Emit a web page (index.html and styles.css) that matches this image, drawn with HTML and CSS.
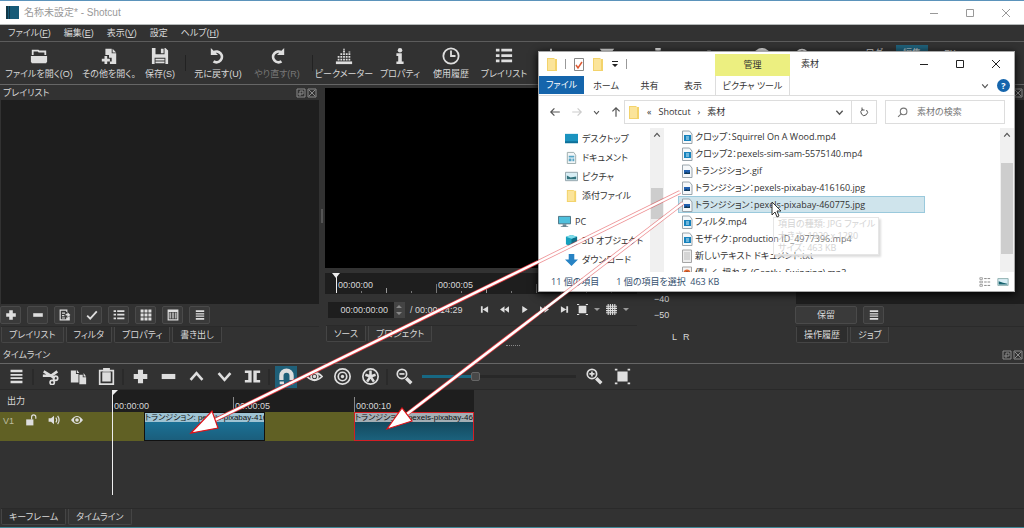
FILE: index.html
```
<!DOCTYPE html>
<html lang="ja">
<head>
<meta charset="utf-8">
<title>名称未設定* - Shotcut</title>
<link rel="stylesheet" href="styles.css">
</head>
<body>
<svg class="defs" aria-hidden="true">
  <symbol id="plus" viewBox="0 0 20 20"><path d="M7 2h6v5h5v6h-5v5H7v-5H2V7h5z"/></symbol>
  <symbol id="minus" viewBox="0 0 20 20"><path d="M2 7h16v6H2z"/></symbol>
  <symbol id="menu" viewBox="0 0 20 20"><path d="M3 2h14v3H3zM3 7h14v2H3zM3 11h14v2H3zM3 15h14v3H3z"/></symbol>
  <symbol id="list" viewBox="0 0 20 20"><path d="M1 2h4v3H1zM7 2h12v3H7zM1 8h4v3H1zM7 8h12v3H7zM1 14h4v3H1zM7 14h12v3H7z"/></symbol>
  <symbol id="float" viewBox="0 0 10 10"><path d="M1 1h8v8H1zM4 3h3v3H4zM3 5v2h2" class="s1"/></symbol>
  <symbol id="close" viewBox="0 0 10 10"><path d="M1 1h8v8H1zM2 2l6 6M8 2l-6 6" class="s1"/></symbol>
  <symbol id="min" viewBox="0 0 10 10"><path d="M1 5.500h8" class="s1"/></symbol>
  <symbol id="max" viewBox="0 0 10 10"><path d="M1.500 1.500h7v7h-7z" class="s1"/></symbol>
  <symbol id="x" viewBox="0 0 10 10"><path d="M1 1l8 8M9 1l-8 8" class="s1"/></symbol>
  <symbol id="up" viewBox="0 0 20 20"><path d="M3 14l7-8 7 8" class="s3"/></symbol>
  <symbol id="down" viewBox="0 0 20 20"><path d="M3 6l7 8 7-8" class="s3"/></symbol>
  <symbol id="folder" viewBox="0 0 12 14"><path d="M1 1h7l1 1h2v12H1z" fill="#f3d36b"/><path d="M2 2h7v11H2z" fill="#fbe49a"/></symbol>
  <symbol id="video" viewBox="0 0 12 14"><path d="M1.500 1h7l2.500 3v9.500H1.500z" fill="#f5f8fa" stroke="#9aa4ab"/><path d="M3 5h7v6H3z" fill="#1682bd"/><path d="M5 7h3M5 9h3" stroke="#c8eaf8"/></symbol>
  <symbol id="image" viewBox="0 0 12 14"><path d="M1.500 1h7l2.500 3v9.500H1.500z" fill="#f5f8fa" stroke="#9aa4ab"/><path d="M3 6h6v4H3z" fill="#1f5faf"/><path d="M3 10l2-2 2 1 2-1v2z" fill="#143a56"/></symbol>
  <symbol id="text" viewBox="0 0 12 14"><path d="M1.500 1h9v12.500h-9z" fill="#eee" stroke="#a5a5a5"/><path d="M3 4h6M3 6h6M3 8h6M3 10h6" stroke="#bbb"/></symbol>
  <symbol id="audio" viewBox="0 0 12 14"><path d="M1.500 1h9v12.500h-9z" fill="#f5f5f5" stroke="#a5a5a5"/><circle cx="6" cy="7" r="3.500" fill="#e0642d"/><circle cx="6" cy="7" r="1.500" fill="#234"/></symbol>
</svg>

<div class="app">
  <header class="titlebar">
    <svg class="logo" viewBox="0 0 13 13"><path d="M0 0h13v13H0z" fill="#175b78"/><path d="M0 0h2v13H0zM3 0h1v13H3z" fill="#123848"/></svg>
    <h1>名称未設定* - Shotcut</h1>
    <div class="winbtns">
      <button aria-label="最小化"><svg><use href="#min"/></svg></button>
      <button aria-label="最大化"><svg><use href="#max"/></svg></button>
      <button aria-label="閉じる"><svg><use href="#x"/></svg></button>
    </div>
  </header>

  <nav class="menubar">
    <button>ファイル(<u>F</u>)</button><button>編集(<u>E</u>)</button><button>表示(<u>V</u>)</button><button>設定</button><button>ヘルプ(<u>H</u>)</button>
  </nav>

  <div class="toolbar">
    <button><svg viewBox="0 0 20 20"><path d="M3 9V4h6l1 1h7v4" class="s2"/><path d="M1 10h18v6l-1 2H2l-1-2z"/></svg>ファイルを開く(O)</button>
    <button><svg viewBox="0 0 20 20"><path d="M6 2h7v5h5v12h-7v-3h2v-4h-3V9H6zM14 2l4 4h-4zM5 10h3v3h3v3H8v3H5v-3H2v-3h3z"/></svg>その他を開く。</button>
    <button><svg viewBox="0 0 20 20"><path fill-rule="evenodd" d="M1 1h15l3 3v15H1zM5 1v7h10V1zM4 12v7h12v-7z"/><path d="M11 2h3v5h-3zM5 13h10v2H5zM5 16h10v2H5z"/></svg>保存(S)</button>
    <i class="sep"></i>
    <button><svg viewBox="0 0 20 20"><path d="M5 6A6 6 0 1 1 5 16" class="s3"/><path d="M2 1v8h8z"/></svg>元に戻す(U)</button>
    <button class="off"><svg viewBox="0 0 20 20"><path d="M15 6A6 6 0 1 0 15 16" class="s3"/><path d="M18 1v8h-8z"/></svg>やり直す(R)</button>
    <i class="sep"></i>
    <button><svg viewBox="0 0 20 20"><path d="M4 15V9M7 15V6M10 15V2M13 15V6M16 15V5" stroke="#dedede" stroke-width="2" stroke-dasharray="2 1"/><path d="M1 16h18v3H1z"/></svg>ピークメーター</button>
    <button><svg viewBox="0 0 20 20"><circle cx="10" cy="3.500" r="2.500"/><path d="M6 7h6v9h2v3H6v-3h2v-6H6z"/></svg>プロパティ</button>
    <button><svg viewBox="0 0 20 20"><circle cx="10" cy="10" r="8.500" class="s2"/><path d="M10 4v6h5" class="s2"/></svg>使用履歴</button>
    <button><svg viewBox="0 0 20 20"><use href="#list"/></svg>プレイリスト</button>
    <button aria-label="フィルタ"><svg viewBox="0 0 20 20"><path d="M10 2v16" class="s2"/></svg></button>
    <button aria-label="キーフレーム"><svg viewBox="0 0 20 20"><path d="M2 2h16l-6 8v8H8v-8z"/></svg></button>
    <button aria-label="タイマー"><svg viewBox="0 0 20 20"><circle cx="10" cy="12" r="7" class="s2"/><path d="M7 1h6v3H7zM16 3l3 3"/></svg></button>
    <button aria-label="タイムライン"><svg viewBox="0 0 20 20"><path d="M8 4h4v13H8z"/></svg></button>
    <button aria-label="書き出し"><svg viewBox="0 0 20 20"><circle cx="10" cy="10" r="9"/></svg></button>
    <button aria-label="ジョブ"><svg viewBox="0 0 20 20"><circle cx="10" cy="10" r="7" class="s2"/></svg></button>
    <div class="layouts"><button>ログ</button><button class="on">編集</button><button>FX</button></div>
  </div>

  <main class="docks">
    <section class="dock">
      <div class="dockhead"><h2>プレイリスト</h2><button aria-label="フロート"><svg><use href="#float"/></svg></button><button aria-label="閉じる"><svg><use href="#close"/></svg></button></div>
      <div class="well"></div>
      <div class="btnrow">
        <button aria-label="追加"><svg><use href="#plus"/></svg></button>
        <button aria-label="削除"><svg><use href="#minus"/></svg></button>
        <button aria-label="更新"><svg viewBox="0 0 20 20"><path d="M1 1h13v4h-2V3H3v14h9v-3h2l4-2v7H1z"/><path d="M5 6h5v2H5zM5 10h4v2H5zM5 14h5v2H5zM11 8h3V5l5 5-5 4v-3h-3z"/></svg></button>
        <button aria-label="適用"><svg viewBox="0 0 20 20"><path d="M2 11l5 5L18 4" class="s3"/></svg></button>
        <button aria-label="詳細"><svg><use href="#list"/></svg></button>
        <button aria-label="タイル"><svg viewBox="0 0 20 20"><path d="M1 1h5v5H1zM7.500 1h5v5h-5zM14 1h5v5h-5zM1 7.500h5v5H1zM7.500 7.500h5v5h-5zM14 7.500h5v5h-5zM1 14h5v5H1zM7.500 14h5v5h-5zM14 14h5v5h-5z"/></svg></button>
        <button aria-label="アイコン"><svg viewBox="0 0 20 20"><path fill-rule="evenodd" d="M1 1h18v18H1zM3 5v12h14V5z"/><path d="M4 6h3v10H4zM8.500 6h3v10h-3zM13 6h3v10h-3z" opacity=".7"/></svg></button>
        <button aria-label="メニュー"><svg><use href="#menu"/></svg></button>
      </div>
      <div class="tabs"><button class="on">プレイリスト</button><button>フィルタ</button><button>プロパティ</button><button>書き出し</button></div>
    </section>

    <div class="splitter"></div>

    <section class="player">
      <div class="screen"></div>
      <div class="scrub">
        <span class="tick first">00:00:00</span><span class="tick">00:00:05</span><span class="tick"></span>
      </div>
      <div class="transport">
        <label class="timebox"><input type="text" value="00:00:00:00" aria-label="現在位置"><span class="spin"><svg viewBox="0 0 10 16"><path d="M2 6l3-3 3 3zM2 10l3 3 3-3z"/></svg></span></label>
        <span class="total">/ 00:00:14:29</span>
        <div class="play">
          <button aria-label="先頭"><svg viewBox="0 0 20 20"><path d="M2 3h4v14H2zM18 3v14L6 10z"/></svg></button>
          <button aria-label="巻き戻し"><svg viewBox="0 0 20 20"><path d="M10 3v14L0 10zM20 3v14l-10-7z"/></svg></button>
          <button aria-label="再生"><svg viewBox="0 0 20 20"><path d="M5 2l12 8-12 8z"/></svg></button>
          <button aria-label="早送り"><svg viewBox="0 0 20 20"><path d="M0 3v14l10-7zM10 3v14l10-7z"/></svg></button>
          <button aria-label="末尾"><svg viewBox="0 0 20 20"><path d="M14 3h4v14h-4zM2 3v14l12-7z"/></svg></button>
          <button class="big" aria-label="ズーム"><svg viewBox="0 0 20 20"><path d="M3 3h14v14H3zM0 0h4v2H0zM16 0h4v2h-4zM0 18h4v2H0zM16 18h4v2h-4z"/></svg><b></b></button>
          <button class="big" aria-label="グリッド"><svg viewBox="0 0 20 20"><path d="M4 0v20M8 0v20M12 0v20M16 0v20M0 4h20M0 8h20M0 12h20M0 16h20" stroke="#dedede" stroke-width="2"/></svg><b></b></button>
        </div>
      </div>
      <div class="tabs"><button>ソース</button><button class="on">プロジェクト</button></div>
      <div class="grip"></div>
    </section>

    <section class="meter"><span>−40</span><span>−50</span><span class="lr"><b>L</b><b>R</b></span></section>

    <section class="dock">
      <div class="dockhead"><h2></h2><button aria-label="閉じる"><svg><use href="#close"/></svg></button></div>
      <div class="well"></div>
      <div class="btnrow"><button class="wide">保留</button><button aria-label="メニュー"><svg><use href="#menu"/></svg></button></div>
      <div class="tabs"><button>操作履歴</button><button class="on">ジョブ</button></div>
    </section>
  </main>

  <section class="timeline">
    <div class="dockhead"><h2>タイムライン</h2><button aria-label="フロート"><svg><use href="#float"/></svg></button><button aria-label="閉じる"><svg><use href="#close"/></svg></button></div>
    <div class="tools">
      <button aria-label="メニュー"><svg><use href="#menu"/></svg></button><i class="sep"></i>
      <button aria-label="切り取り"><svg viewBox="0 0 20 20"><path d="M2 4l13 8M1 9h10l7-5" class="s3"/><circle cx="16" cy="12" r="2.500" class="s2"/><circle cx="12" cy="17" r="2.500" class="s2"/></svg></button>
      <button aria-label="コピー"><svg viewBox="0 0 20 20"><path d="M1 3h6v4h3v10H1zM8 2l3 4H8zM11 8h4v3h4v8h-8zM16 6l3 4h-3z"/></svg></button>
      <button aria-label="貼り付け"><svg viewBox="0 0 20 20"><path d="M2 3h16v16H2z" class="s2"/><path d="M5 5h10v11H5zM6 0h8v4H6z"/></svg></button><i class="sep"></i>
      <button aria-label="追加"><svg><use href="#plus"/></svg></button>
      <button aria-label="削除"><svg><use href="#minus"/></svg></button>
      <button aria-label="リフト"><svg><use href="#up"/></svg></button>
      <button aria-label="上書き"><svg><use href="#down"/></svg></button>
      <button aria-label="分割"><svg viewBox="0 0 20 20"><path d="M1 3h8v14H1v-3h4V6H1zM11 3h8v3h-4v8h4v3h-8z"/></svg></button><i class="sep"></i>
      <button class="on" aria-label="スナップ"><svg viewBox="0 0 20 20"><path d="M4 14V9a6 6 0 0112 0v5" stroke="#dedede" stroke-width="5" fill="none"/><path d="M2 16h5v3H2zM13 16h5v3h-5z"/></svg></button>
      <button aria-label="スクラブ"><svg viewBox="0 0 20 20"><path d="M1 10q9-9 18 0-9 9-18 0z" class="s2"/><circle cx="10" cy="10" r="4" class="s2"/><circle cx="10" cy="10" r="2"/></svg></button>
      <button aria-label="リップル"><svg viewBox="0 0 20 20"><circle cx="10" cy="10" r="9" class="s2"/><circle cx="10" cy="10" r="5" class="s2"/><circle cx="10" cy="10" r="2"/></svg></button>
      <button aria-label="全トラックをリップル"><svg viewBox="0 0 20 20"><circle cx="10" cy="10" r="9" class="s2"/><path d="M10 3v7M10 10L4 8M10 10l6-2M10 10l-4 6M10 10l4 6" class="s3"/></svg></button><i class="sep"></i>
      <button aria-label="縮小"><svg viewBox="0 0 20 20"><circle cx="7" cy="7" r="5.500" class="s2"/><path d="M4 7h6" class="s2"/><path d="M12 12l6 6" class="s4"/></svg></button>
      <input type="range" min="0" max="100" value="34" aria-label="ズーム">
      <button aria-label="拡大"><svg viewBox="0 0 20 20"><circle cx="7" cy="7" r="5.500" class="s2"/><path d="M4 7h6M7 4v6" class="s2"/><path d="M12 12l6 6" class="s4"/></svg></button>
      <button aria-label="全体表示"><svg viewBox="0 0 20 20"><path d="M4 4h12v12H4zM1 1h3v2H1zM16 1h3v2h-3zM1 17h3v2H1zM16 17h3v2h-3z"/></svg></button>
    </div>
    <div class="tracks">
      <div class="output">出力</div>
      <div class="ruler"><span>00:00:00</span><span>00:00:05</span><span>00:00:10</span></div>
      <div class="trackhead"><span>V1</span>
        <svg viewBox="0 0 20 20"><path d="M2 9h12v10H2z"/><path d="M11 9V5a3.500 3.500 0 017 0v3" class="s2"/></svg>
        <svg viewBox="0 0 20 20"><path d="M1 7h4l5-4v14l-5-4H1z"/><path d="M13 6q3 4 0 8M16 3q5 7 0 14" class="s2"/></svg>
        <svg viewBox="0 0 20 20"><path fill-rule="evenodd" d="M0 10Q10-3 20 10 10 23 0 10zM10 5a5 5 0 100 10 5 5 0 000-10z"/><circle cx="10" cy="10" r="3"/></svg>
      </div>
      <div class="track">
        <div class="clip"><span>トランジション: pexels-pixabay-416160</span></div>
        <div class="clip sel"><span>トランジション: pexels-pixabay-460775</span></div>
      </div>
      <div class="playhead"></div>
    </div>
    <div class="tabs"><button>キーフレーム</button><button class="on">タイムライン</button></div>
  </section>

  <section class="explorer">
    <header class="xtitle">
      <div class="quick"><svg class="fi"><use href="#folder"/></svg><i></i><svg class="fi" viewBox="0 0 12 14"><path d="M1.500 1.500h9v12h-9z" fill="#fff" stroke="#888"/><path d="M3 8l2 3 4-6" fill="none" stroke="#dd5a33" stroke-width="1.500"/></svg><svg class="fi"><use href="#folder"/></svg><svg class="caret" viewBox="0 0 8 8"><path d="M1 1h6v1H1zM1 4h6L4 7z" fill="#222"/></svg><i></i></div>
      <div class="ctx">管理</div><h2>素材</h2>
      <div class="winbtns">
        <button aria-label="最小化"><svg><use href="#min"/></svg></button>
        <button aria-label="最大化"><svg><use href="#max"/></svg></button>
        <button aria-label="閉じる"><svg><use href="#x"/></svg></button>
      </div>
    </header>
    <nav class="ribbon"><button class="file">ファイル</button><button>ホーム</button><button>共有</button><button>表示</button><button class="pic">ピクチャ ツール</button><span class="help"><svg viewBox="0 0 20 20"><use href="#down"/></svg><b>?</b></span></nav>
    <div class="address">
      <div class="navs">
        <svg viewBox="0 0 20 20"><path d="M18 10H3M9 4l-6 6 6 6" class="s2"/></svg>
        <svg class="dim" viewBox="0 0 20 20"><path d="M2 10h15M11 4l6 6-6 6" class="s2"/></svg>
        <svg class="tiny"><use href="#down"/></svg>
        <svg viewBox="0 0 20 20"><path d="M10 18V3M4 9l6-6 6 6" class="s2"/></svg>
      </div>
      <div class="path"><svg class="fi"><use href="#folder"/></svg><span>«</span><span>Shotcut</span><span>›</span><span>素材</span><svg class="drop"><use href="#down"/></svg><button aria-label="更新"><svg viewBox="0 0 20 20"><path d="M7 5a6.500 6.500 0 108 1M6 1v5h5" class="s2"/></svg></button></div>
      <label class="search"><svg viewBox="0 0 20 20"><circle cx="12" cy="8" r="6" class="s2"/><path d="M8 12l-6 6" class="s2"/></svg><input type="text" placeholder="素材の検索" aria-label="素材の検索"></label>
    </div>
    <div class="xbody">
      <ul class="side">
        <li><svg viewBox="0 0 14 14"><path d="M0 2h14v10H0z" fill="#1b93bf"/><path d="M0 10h14v2H0z" fill="#0e6f98"/></svg>デスクトップ</li>
        <li><svg viewBox="0 0 14 14"><path d="M2.500 1.500h7l2 3v9h-9z" fill="#f2f6f8" stroke="#9aa"/><path d="M4 5h6v2H4zM4 8h3v3H4zM8 8h2v3H8z" fill="#57a6c6"/></svg>ドキュメント</li>
        <li><svg viewBox="0 0 14 14"><path d="M.5 2.500h13v9H.5z" fill="#d8eef5" stroke="#8fa1a8"/><path d="M2 10V6l4 2 6-1v3z" fill="#33747e"/></svg>ピクチャ</li>
        <li><svg viewBox="0 0 12 14"><use href="#folder"/></svg>添付ファイル</li>
        <li class="root"><svg viewBox="0 0 14 14"><path d="M.5 1.500h13v8H.5z" fill="#4fc0dd" stroke="#4a6f80"/><path d="M5 10h4v2h2v1H3v-1h2z" fill="#6c8794"/></svg>PC</li>
        <li><svg viewBox="0 0 14 14"><path d="M7 1l6 2v8l-6 3-6-3V3z" fill="#16a0bd"/><path d="M7 5l6-2v8l-6 3z" fill="#0d6f88"/><path d="M1 3l6-2 6 2-6 2z" fill="#7fdcea"/></svg>3D オブジェクト</li>
        <li><svg viewBox="0 0 14 14"><path d="M4 1h6v6h4l-7 7-7-7h4z" fill="#2783c4"/></svg>ダウンロード</li>
      </ul>
      <div class="scroll low"><svg><use href="#up"/></svg><b></b><svg><use href="#down"/></svg></div>
      <ul class="files">
        <li><svg><use href="#video"/></svg>クロップ：Squirrel On A Wood.mp4</li>
        <li><svg><use href="#video"/></svg>クロップ2：pexels-sim-sam-5575140.mp4</li>
        <li><svg><use href="#image"/></svg>トランジション.gif</li>
        <li><svg><use href="#image"/></svg>トランジション：pexels-pixabay-416160.jpg</li>
        <li class="sel"><svg><use href="#image"/></svg>トランジション：pexels-pixabay-460775.jpg</li>
        <li><svg><use href="#video"/></svg>フィルタ.mp4</li>
        <li><svg><use href="#video"/></svg>モザイク：production ID_4977396.mp4</li>
        <li><svg><use href="#text"/></svg>新しいテキスト ドキュメント.txt</li>
        <li><svg><use href="#audio"/></svg>優しく、揺れる (Gently, Swinging).mp3</li>
      </ul>
      <div class="scroll"><svg><use href="#up"/></svg><b></b><svg><use href="#down"/></svg></div>
    </div>
    <footer class="status"><span>11 個の項目</span><span>1 個の項目を選択&ensp;463 KB</span>
      <svg viewBox="0 0 14 12"><path d="M1 1h3v2H1zM1 5h3v2H1zM1 9h3v2H1z" fill="none" stroke="#999"/><path d="M6 2h3M10 2h3M6 6h3M10 6h3M6 10h3M10 10h3" stroke="#777"/></svg>
      <svg viewBox="0 0 14 12"><path d="M1 2h12v8H1z" fill="#d8eef5" stroke="#8aa"/><path d="M2 9V5l5 2 5 1v1z" fill="#17636e"/></svg>
    </footer>
    <div class="tip"><span>項目の種類: JPG ファイル</span><span>大きさ: 1920 x 1280</span><span>サイズ: 463 KB</span></div>
  </section>

  <svg class="arrows" viewBox="0 0 1024 528" aria-hidden="true">
    <g stroke="#e0383e" stroke-width="4"><path d="M680 192L538 262M683 203L538 314" opacity=".55"/><path d="M538 262L215 420M538 314L407 414"/></g>
    <path d="M680 192L538 262L215 420M683 203L538 314L407 414" stroke="#fff" stroke-width="2.500"/>
    <path d="M191 433l21-22 6 17zM387 429l15-21 10 13z" fill="#fff" stroke="#e01218" stroke-width="1.200"/>
  </svg>
  <svg class="cursor" viewBox="0 0 12 18" aria-hidden="true"><path d="M1 1v13l3-3 2 5 2-1-2-5h4z" fill="#fff" stroke="#333"/></svg>
</div>
</body>
</html>
```
FILE: styles.css
```
* { box-sizing: border-box; }
body {
  margin: 0;
  background: #323232;
  color: #d8d8d8;
  font: 9px/14px "Liberation Sans", "Noto Sans CJK JP", sans-serif;
  font-feature-settings: "palt";
  white-space: nowrap;
}
h1, h2, ul { margin: 0; padding: 0; font: inherit; list-style: none; }
button {
  display: flex;
  align-items: center;
  justify-content: center;
  padding: 0;
  border: 0;
  background: none;
  color: inherit;
  font: inherit;
  font-feature-settings: inherit;
}
input { font: inherit; color: inherit; min-width: 0; }
svg { display: block; flex: none; fill: #dedede; width: 14px; height: 14px; }
.defs { position: absolute; width: 0; height: 0; }
.s1, .s2, .s3, .s4 { fill: none; stroke: var(--ink, #dedede); }
.s1 { stroke-width: 1; }
.s2 { stroke-width: 2; }
.s3 { stroke-width: 3; }
.s4 { stroke-width: 4; }

.app {
  position: relative;
  display: flex;
  flex-direction: column;
  min-height: 100vh;
  overflow: hidden;
  border-top: 1px solid #5b93bb;
  border-bottom: 1px solid #3f8796;
}
.titlebar {
  --ink: #999;
  display: flex;
  align-items: center;
  gap: 5px;
  height: 24px;
  padding-left: 6px;
  background: #fff;
  border-bottom: 1px solid #b5b9b9;
  color: #999;
}
.titlebar h1 { font-size: 10px; }
.logo { width: 13px; height: 13px; }
.winbtns { display: flex; margin-left: auto; }
.winbtns button { width: 36px; height: 20px; }
.winbtns svg { width: 10px; height: 10px; }

.menubar {
  display: flex;
  gap: 13px;
  height: 17px;
  padding-left: 8px;
  border-bottom: 1px solid #5c5c5c;
}
.toolbar {
  display: grid;
  grid-template-columns: 78px 62px 40px 10px 56px 62px 8px 56px 56px 46px 60px 34px 78px 24px 78px 28px 52px 1fr;
  height: 43px;
  border-bottom: 1px solid #666;
}
.toolbar > button {
  flex-direction: column;
  justify-content: flex-start;
  gap: 2px;
  padding-top: 5px;
}
.toolbar > button > svg { width: 18px; height: 18px; }
.toolbar .off { color: #777; }
.sep { width: 1px; height: 16px; margin: auto; background: #222; }
.layouts { display: flex; align-items: flex-start; gap: 6px; padding: 3px 0 0 30px; }
.layouts button { width: 32px; height: 16px; }
.layouts .on { background: #1f6079; }

.docks {
  display: grid;
  grid-template-columns: 319fr 6px 312fr 158fr 229fr;
  height: 261px;
}
.dock, .player { display: flex; flex-direction: column; min-width: 0; }
.dockhead { display: flex; align-items: center; gap: 1px; height: 15px; padding: 0 1px 0 3px; --ink: #8a8a8a; }
.dock .dockhead:has(button + button) { padding-right: 2px; }
.dockhead h2 { margin-right: auto; }
.dockhead svg { width: 10px; height: 10px; }
.well { flex: 1; margin-left: 1px; background: #1e1e1e; }
.btnrow { display: flex; gap: 6px; padding: 2px 0; }
.btnrow button {
  width: 21px;
  height: 18px;
  border: 1px solid #4a4a4a;
  border-radius: 2px;
  background: #3a3a3a;
}
.btnrow .wide { width: 62px; }
.btnrow svg { width: 12px; height: 12px; }
.tabs { display: flex; gap: 2px; height: 20px; margin-left: 1px; padding-bottom: 4px; border-top: 1px solid #2a2a2a; }
.tabs button {
  height: 16px;
  padding: 0 7px;
  border: 1px solid #454545;
  border-top: 0;
  border-radius: 0 0 2px 2px;
  background: #2d2d2d;
}
.tabs .on { background: #343434; }
.splitter { align-self: center; width: 2px; height: 14px; margin: 0 2px; background: #555; }

.player .screen { flex: 1; margin-top: 3px; background: #000; }
.scrub {
  display: grid;
  grid-template-columns: 11px 100px 100px 100px;
  height: 21px;
  margin-top: 5px;
  overflow: hidden;
  background: #1e1e1e;
}
.tick {
  height: 20px;
  padding: 5px 0 0 2px;
  background:
    linear-gradient(#777, #777) 0 100% / 1px 9px no-repeat,
    linear-gradient(#777, #777) 25px 100% / 1px 2px no-repeat,
    linear-gradient(#999, #999) 50px 100% / 1px 5px no-repeat,
    linear-gradient(#777, #777) 75px 100% / 1px 2px no-repeat;
}
.tick.first { grid-column: 2; position: relative; }
.tick.first::before {
  content: "";
  position: absolute;
  left: -4px;
  top: 0;
  border: 4px solid transparent;
  border-top: 5px solid #eee;
}
.tick.first::after { content: ""; position: absolute; left: 0; top: 0; width: 1px; height: 20px; background: #eee; }
.transport { display: flex; align-items: center; height: 31px; padding-left: 3px; }
.timebox { display: flex; height: 16px; background: #1e1e1e; }
.timebox input { width: 66px; padding: 0 6px 0 0; border: 0; background: none; text-align: right; }
.spin { width: 11px; background: #444; }
.spin svg { width: 10px; height: 16px; fill: #888; }
.total { width: 64px; padding-left: 5px; }
.play { display: flex; margin-left: 5px; }
.play button { width: 20px; }
.play svg { width: 9px; height: 9px; }
.play .big { width: 29px; gap: 6px; }
.play .big svg { width: 11px; height: 11px; }
.play .big b { border: 3px solid transparent; border-top-color: #999; border-bottom: 0; }
.grip { align-self: flex-end; width: 14px; margin: 0 117px 0 0; border-top: 1px dotted #888; }
.meter { display: flex; flex-direction: column; justify-content: flex-end; gap: 2px; padding: 0 0 2px 17px; }
.lr { display: flex; gap: 6px; padding: 6px 0 0 18px; }
.lr b { font-weight: 400; }

.timeline { display: flex; flex: 1; flex-direction: column; }
.timeline .dockhead { height: 18px; border-bottom: 1px solid #666; }
.tools { display: flex; align-items: center; height: 26px; padding-left: 2px; border-bottom: 1px solid #292929; }
.tools button { width: 22px; height: 22px; margin: 0 3px; }
.tools button svg { width: 17px; height: 17px; }
.tools .on { background: #1f6079; }
.tools .sep { width: 2px; margin: 0 2px; background: #2a2a2a; }
.tools input {
  appearance: none;
  width: 154px;
  height: 12px;
  margin: 0 4px;
  background: linear-gradient(90deg, #176883 34%, #282828 34%) center / 100% 3px no-repeat;
}
.tools input::-webkit-slider-thumb {
  appearance: none;
  width: 9px;
  height: 9px;
  border: 1px solid #666;
  border-radius: 2px;
  background: #484848;
}
.tracks {
  position: relative;
  display: grid;
  grid-template-columns: 112px 362px;
  grid-template-rows: 22px 29px 1fr;
  flex: 1;
}
.output { padding: 4px 7px; }
.ruler { display: grid; grid-template-columns: 121px 121px 120px; background: #1e1e1e; }
.ruler span { height: 15px; margin-top: 7px; padding: 2px 0 0 1px; border-left: 1px solid #888; }
.trackhead, .track { background: #606024; }
.trackhead { display: flex; gap: 11px; padding: 2px 3px; color: #bcbca0; }
.trackhead svg { width: 12px; height: 12px; }
.track { display: grid; grid-template-columns: 121px 120px; gap: 89px; padding-left: 32px; color: #111; }
.clip { overflow: hidden; border: 1px solid #111; background: linear-gradient(#1b7ba3, #1b5e7c); }
.clip span { display: block; height: 9px; font-size: 8px; line-height: 9px; background: #9ec3d3; }
.clip.sel { border-color: #d41e24; background: linear-gradient(#103e50, #1b617c); }
.clip.sel span { background: #a4aeb4; }
.playhead { position: absolute; left: 112px; top: 0; width: 1px; height: 105px; background: #eee; }
.playhead::before { content: ""; position: absolute; border: 3px solid #eee; border-right-color: transparent; border-bottom-color: transparent; }
.timeline > .tabs { height: 19px; padding-bottom: 2px; }

.explorer {
  --ink: #555;
  position: absolute;
  left: 538px;
  top: 50px;
  width: 477px;
  display: flex;
  flex-direction: column;
  border: 1px solid #a8a8a8;
  background: #fff;
  color: #333;
  font-family: "Open Sans", "Noto Sans CJK JP", sans-serif;
  box-shadow: 0 2px 8px #000;
}
.explorer svg { width: 12px; height: 14px; }
.xtitle { display: grid; grid-template-columns: 176px 75px 1fr auto; align-items: center; height: 24px; }
.xtitle .winbtns { --ink: #222; }
.xtitle .winbtns svg { width: 10px; height: 10px; }
.quick { display: flex; align-items: center; gap: 7px; padding-left: 7px; }
.quick i { width: 1px; height: 10px; background: #999; }
.explorer .caret { width: 8px; height: 8px; }
.ctx { align-self: end; height: 22px; padding-top: 4px; background: #ecef80; text-align: center; }
.xtitle h2 { padding-left: 11px; }
.ribbon { display: grid; grid-template-columns: 45px 44px 43px 44px 75px 1fr; height: 20px; border-bottom: 1px solid #ddd; }
.ribbon .file { margin-bottom: 1px; background: #1565ac; color: #fff; }
.ribbon .pic { border: solid #ddd; border-width: 0 1px; }
.help { display: flex; align-items: center; justify-content: flex-end; gap: 8px; padding-right: 4px; }
.help svg { width: 8px; height: 8px; }
.help b { width: 13px; height: 13px; border-radius: 50%; background: #1565ac; color: #fff; line-height: 13px; text-align: center; }
.address { display: grid; grid-template-columns: 85px 253px 1fr; padding: 4px 9px 4px 0; }
.navs { display: flex; align-items: center; gap: 10px; padding-left: 10px; }
.navs .dim { --ink: #ccc; }
.explorer .navs svg { width: 12px; height: 12px; }
.explorer .navs .tiny { width: 7px; height: 7px; }
.path, .search { display: flex; align-items: center; gap: 7px; height: 24px; border: 1px solid #ddd; }
.path { padding-left: 3px; }
.explorer .path .drop { width: 9px; height: 9px; margin-left: auto; }
.path button { width: 25px; height: 22px; border-left: 1px solid #ddd; }
.explorer .path button svg { width: 10px; height: 10px; }
.search { --ink: #777; gap: 9px; margin-left: 8px; padding-left: 11px; color: #777; }
.explorer .search svg { width: 11px; height: 11px; }
.search input { width: 80px; padding: 0; border: 0; background: none; font-feature-settings: inherit; }
.search input::placeholder { color: #777; }
.xbody { display: grid; grid-template-columns: 111px 14px 1fr 14px; height: 144px; overflow: hidden; }
.side { padding-top: 1px; }
.side li { display: flex; align-items: center; gap: 4px; height: 19px; padding-left: 26px; }
.explorer .side svg { width: 13px; height: 13px; }
.side .root { margin-top: 7px; padding-left: 19px; }
.scroll { display: flex; flex-direction: column; align-items: center; background: #f0f0f0; }
.explorer .scroll svg { width: 8px; height: 14px; }
.scroll b { width: 12px; height: 91px; margin: 21px 0 auto; background: #cdcdcd; }
.scroll.low b { height: 31px; margin-top: 46px; }
.files { padding-left: 14px; }
.files li { display: flex; align-items: center; gap: 2px; width: 247px; height: 17px; padding-left: 3px; }
.files .sel { outline: 1px solid #9ac9dc; outline-offset: -1px; background: #cfe4ec; }
.status { display: flex; align-items: center; gap: 17px; height: 19px; padding: 0 5px 0 12px; color: #34506e; }
.status svg:first-of-type { margin-left: auto; }
.status svg + svg { margin-left: -11px; }
.tip {
  position: absolute;
  left: 234px;
  top: 165px;
  width: 106px;
  display: flex;
  flex-direction: column;
  padding: 0 4px;
  border: 1px solid #e6e6e6;
  background: rgba(255, 255, 255, .3);
  color: #d4d4d4;
  line-height: 12px;
  box-shadow: 2px 2px 2px #ddd;
}
.arrows { position: absolute; left: 0; top: -1px; width: 1024px; height: 528px; fill: none; pointer-events: none; }
.cursor { position: absolute; left: 771px; top: 200px; width: 12px; height: 18px; }
```
